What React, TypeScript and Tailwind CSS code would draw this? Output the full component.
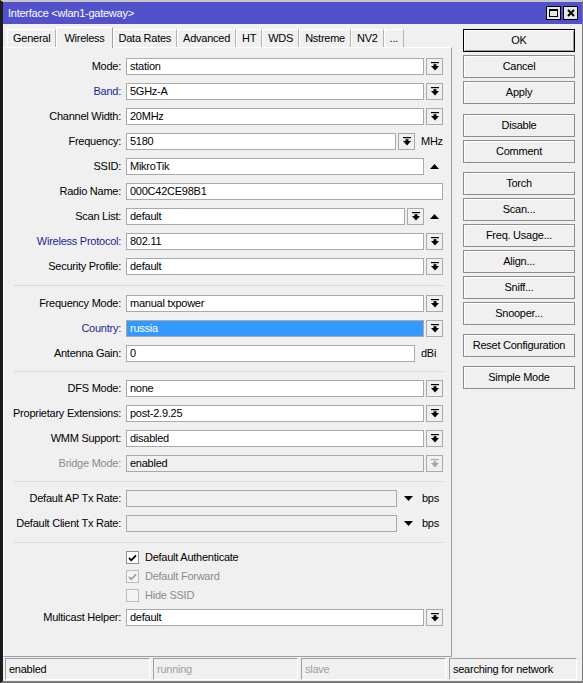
import React from "react";

const FONT = { fontFamily: '"Liberation Sans", Arial, sans-serif' };

function DropIcon({ disabled = false }: { disabled?: boolean }) {
  const c = disabled ? "#a8a8a8" : "#000";
  return (
    <svg width="8" height="9" viewBox="0 0 8 9">
      <rect x="0" y="0" width="8" height="1.2" fill={c} />
      <rect x="2.5" y="2.2" width="3" height="2" fill={c} />
      <polygon points="0,4 8,4 4,8.5" fill={c} />
    </svg>
  );
}

function DropBtn({ disabled = false }: { disabled?: boolean }) {
  return (
    <div className="w-[17px] h-[17px] shrink-0 border border-[#a9a9a9] bg-[#f0f0f0] flex items-center justify-center">
      <DropIcon disabled={disabled} />
    </div>
  );
}

function UpTri() {
  return (
    <svg width="9" height="5" viewBox="0 0 9 5">
      <polygon points="0,5 9,5 4.5,0" fill="#000" />
    </svg>
  );
}

function DownTri() {
  return (
    <svg width="9" height="5" viewBox="0 0 9 5">
      <polygon points="0,0 9,0 4.5,5" fill="#000" />
    </svg>
  );
}

function Input({
  value,
  disabled = false,
  selected = false,
}: {
  value?: string;
  disabled?: boolean;
  selected?: boolean;
}) {
  const bg = selected ? "bg-[#3399ff] text-white" : disabled ? "bg-[#f0f0f0] text-black" : "bg-white text-black";
  return (
    <div
      className={`h-[17px] flex-1 min-w-0 border border-[#a9a9a9] ${bg} flex items-center pl-[3px] text-[11px] leading-none whitespace-nowrap overflow-hidden`}
    >
      {value}
    </div>
  );
}

type LabelKind = "normal" | "blue" | "grey";

function Row({
  label,
  kind = "normal",
  children,
}: {
  label: string;
  kind?: LabelKind;
  children: React.ReactNode;
}) {
  const color = kind === "blue" ? "text-[#1f1f94]" : kind === "grey" ? "text-[#8c8c8c]" : "text-black";
  return (
    <div className="h-[25px] flex items-center pr-[8px]">
      <div className={`w-[117px] text-right text-[11px] leading-none whitespace-nowrap ${color}`}>{label}</div>
      <div className="w-[5px]" />
      <div className="flex-1 flex items-center gap-[2px] min-w-0">{children}</div>
    </div>
  );
}

function Sep({ h }: { h: string }) {
  return (
    <div className={`${h} flex items-center pl-[10px] pr-[8px]`}>
      <div className="h-px w-full bg-[#d9d9d9]" />
    </div>
  );
}

function Check({ label, checked, disabled = false }: { label: string; checked: boolean; disabled?: boolean }) {
  const c = disabled ? "#a0a0a0" : "#000";
  return (
    <div className="h-[19px] flex items-center pl-[122px]">
      <div
        className={`w-[13px] h-[13px] border ${disabled ? "border-[#bcbcbc] bg-[#f4f4f4]" : "border-[#8f8f8f] bg-white"} flex items-center justify-center`}
      >
        {checked && (
          <svg width="9" height="8" viewBox="0 0 9 8">
            <path d="M1 4 L3.3 6.3 L8 1.3" stroke={c} strokeWidth="1.8" fill="none" />
          </svg>
        )}
      </div>
      <div className={`ml-[6px] text-[11px] leading-none ${disabled ? "text-[#8c8c8c]" : "text-black"}`}>{label}</div>
    </div>
  );
}

function Btn({ label, def = false }: { label: string; def?: boolean }) {
  return (
    <div
      className={`h-[23px] w-[112px] flex items-center justify-center text-[11px] leading-none text-black bg-[#f0f0f0] ${
        def ? "border border-black shadow-[inset_1px_1px_0_#fff,inset_-1px_-1px_0_#a0a0a0]" : "border border-[#8c8c8c] shadow-[inset_1px_1px_0_#fff]"
      }`}
    >
      {label}
    </div>
  );
}

function Tab({ label, active = false }: { label: string; active?: boolean }) {
  if (active) {
    return (
      <div className="h-[21px] -mb-px relative z-10 px-[7px] bg-[#f0f0f0] border border-b-0 border-t-white border-l-white border-r-[#a0a0a0] flex items-center text-[11px] leading-none text-black self-end">
        {label}
      </div>
    );
  }
  return (
    <div className="h-[18px] px-[5px] bg-[#f0f0f0] border border-b-0 border-t-white border-l-white border-r-[#b4b4b4] flex items-center text-[11px] leading-none text-black self-end">
      {label}
    </div>
  );
}

function StatusCell({ text, grey = false, w }: { text: string; grey?: boolean; w: string }) {
  return (
    <div
      className={`${w} h-[22px] border border-t-[#a0a0a0] border-l-[#a0a0a0] border-b-white border-r-white flex items-center pl-[3px] text-[11px] leading-none ${
        grey ? "text-[#a0a0a0]" : "text-black"
      }`}
    >
      {text}
    </div>
  );
}

export default function App() {
  return (
    <div
      style={FONT}
      className="w-[583px] h-[683px] bg-[#f0f0f0] tracking-[-0.25px] border-t-2 border-t-[#c8c8c8] border-l-[3px] border-l-[#1c1c1c] border-r border-r-[#7a7a7a] border-b-2 border-b-[#7a7a7a] flex flex-col overflow-hidden"
    >
      {/* Title bar */}
      <div className="h-[22px] shrink-0 bg-[#5151cb] flex items-center pl-[5px] pr-[4px]">
        <div className="text-white text-[11px] leading-none flex-1 pt-px">Interface &lt;wlan1-gateway&gt;</div>
        <div className="flex gap-[2px]">
          <div className="w-[15px] h-[14px] bg-[#e6e6e6] border border-black flex items-center justify-center">
            <div className="w-[9px] h-[8px] border border-black border-t-2" />
          </div>
          <div className="w-[15px] h-[14px] bg-[#e6e6e6] border border-black flex items-center justify-center">
            <svg width="8" height="8" viewBox="0 0 8 8">
              <path d="M1 1 L7 7 M7 1 L1 7" stroke="#000" strokeWidth="2" />
            </svg>
          </div>
        </div>
      </div>

      {/* Body */}
      <div className="flex flex-1 min-h-0">
        {/* Left column */}
        <div className="w-[449px] flex flex-col">
          <div className="h-[23px] flex items-end pl-[4px]">
            <Tab label="General" />
            <Tab label="Wireless" active />
            <Tab label="Data Rates" />
            <Tab label="Advanced" />
            <Tab label="HT" />
            <Tab label="WDS" />
            <Tab label="Nstreme" />
            <Tab label="NV2" />
            <Tab label="..." />
          </div>
          <div className="h-[610px] border border-t-white border-l-white border-r-[#a0a0a0] border-b-[#a0a0a0] pt-[6px]">
            <Row label="Mode:">
              <Input value="station" />
              <DropBtn />
            </Row>
            <Row label="Band:" kind="blue">
              <Input value="5GHz-A" />
              <DropBtn />
            </Row>
            <Row label="Channel Width:">
              <Input value="20MHz" />
              <DropBtn />
            </Row>
            <Row label="Frequency:">
              <Input value="5180" />
              <DropBtn />
              <div className="w-[26px] pl-[4px] text-[11px] leading-none">MHz</div>
            </Row>
            <Row label="SSID:">
              <Input value="MikroTik" />
              <div className="w-[17px] flex justify-center">
                <UpTri />
              </div>
            </Row>
            <Row label="Radio Name:">
              <Input value="000C42CE98B1" />
            </Row>
            <Row label="Scan List:">
              <Input value="default" />
              <DropBtn />
              <div className="w-[17px] flex justify-center">
                <UpTri />
              </div>
            </Row>
            <Row label="Wireless Protocol:" kind="blue">
              <Input value="802.11" />
              <DropBtn />
            </Row>
            <Row label="Security Profile:">
              <Input value="default" />
              <DropBtn />
            </Row>
            <Sep h="h-[12px]" />
            <Row label="Frequency Mode:">
              <Input value="manual txpower" />
              <DropBtn />
            </Row>
            <Row label="Country:" kind="blue">
              <Input value="russia" selected />
              <DropBtn />
            </Row>
            <Row label="Antenna Gain:">
              <Input value="0" />
              <div className="w-[26px] pl-[4px] text-[11px] leading-none">dBi</div>
            </Row>
            <Sep h="h-[10px]" />
            <Row label="DFS Mode:">
              <Input value="none" />
              <DropBtn />
            </Row>
            <Row label="Proprietary Extensions:">
              <Input value="post-2.9.25" />
              <DropBtn />
            </Row>
            <Row label="WMM Support:">
              <Input value="disabled" />
              <DropBtn />
            </Row>
            <Row label="Bridge Mode:" kind="grey">
              <Input value="enabled" disabled />
              <DropBtn disabled />
            </Row>
            <Sep h="h-[10px]" />
            <Row label="Default AP Tx Rate:">
              <Input disabled />
              <div className="w-[18px] flex justify-center">
                <DownTri />
              </div>
              <div className="w-[24px] pl-[3px] text-[11px] leading-none">bps</div>
            </Row>
            <Row label="Default Client Tx Rate:">
              <Input disabled />
              <div className="w-[18px] flex justify-center">
                <DownTri />
              </div>
              <div className="w-[24px] pl-[3px] text-[11px] leading-none">bps</div>
            </Row>
            <Sep h="h-[12px]" />
            <Check label="Default Authenticate" checked />
            <Check label="Default Forward" checked disabled />
            <Check label="Hide SSID" checked={false} disabled />
            <Row label="Multicast Helper:">
              <Input value="default" />
              <DropBtn />
            </Row>
          </div>
        </div>

        {/* Right column */}
        <div className="ml-[11px] pt-[5px] flex flex-col">
          <div className="flex flex-col gap-[3px]">
            <Btn label="OK" def />
            <Btn label="Cancel" />
            <Btn label="Apply" />
          </div>
          <div className="flex flex-col gap-[3px] mt-[10px]">
            <Btn label="Disable" />
            <Btn label="Comment" />
          </div>
          <div className="flex flex-col gap-[3px] mt-[9px]">
            <Btn label="Torch" />
            <Btn label="Scan..." />
            <Btn label="Freq. Usage..." />
            <Btn label="Align..." />
            <Btn label="Sniff..." />
            <Btn label="Snooper..." />
          </div>
          <div className="flex flex-col gap-[3px] mt-[9px]">
            <Btn label="Reset Configuration" />
          </div>
          <div className="flex flex-col gap-[3px] mt-[9px]">
            <Btn label="Simple Mode" />
          </div>
        </div>
      </div>

      {/* Status bar */}
      <div className="h-[24px] shrink-0 flex items-center gap-[3px] pl-[2px]">
        <StatusCell text="enabled" w="w-[145px]" />
        <StatusCell text="running" grey w="w-[145px]" />
        <StatusCell text="slave" grey w="w-[145px]" />
        <StatusCell text="searching for network" w="w-[128px]" />
      </div>
    </div>
  );
}
